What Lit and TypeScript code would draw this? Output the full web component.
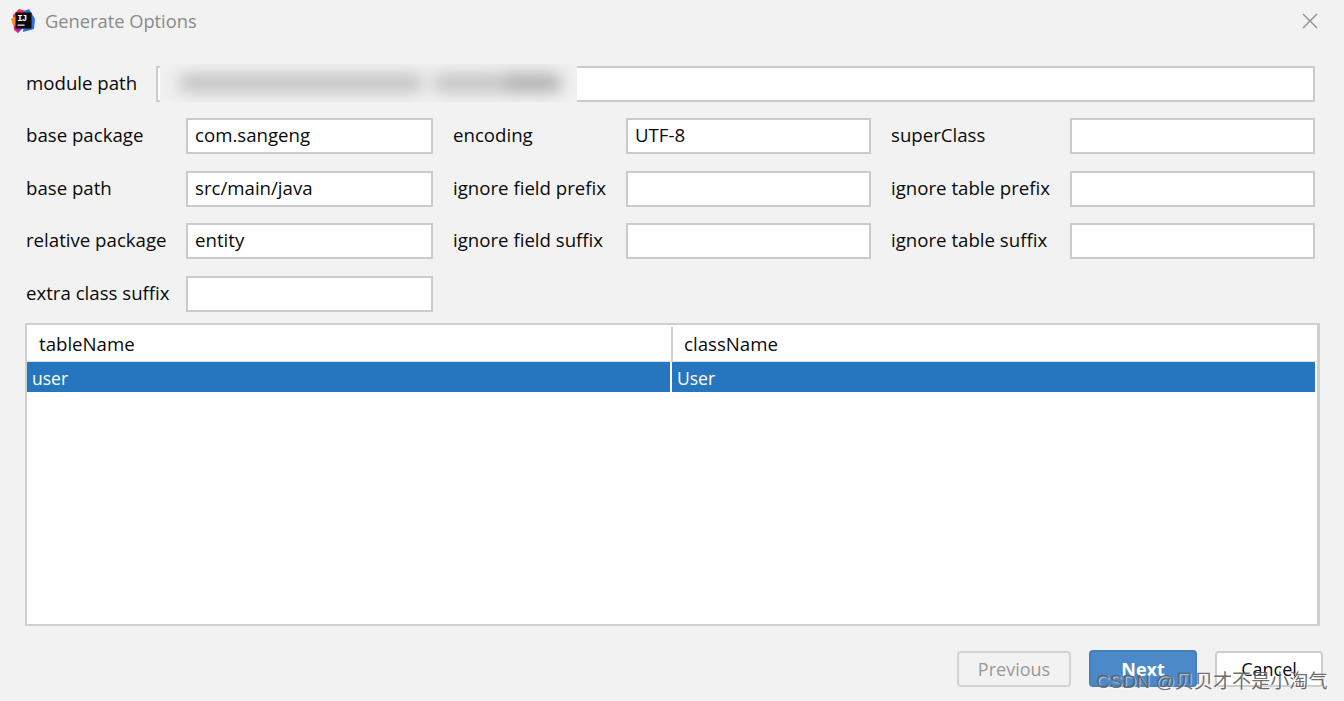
import { LitElement, html, css } from "lit";
import { customElement } from "lit/decorators.js";

const rows: [string, string, string, string, string, string][] = [
  ["base package", "com.sangeng", "encoding", "UTF-8", "superClass", ""],
  ["base path", "src/main/java", "ignore field prefix", "", "ignore table prefix", ""],
  ["relative package", "entity", "ignore field suffix", "", "ignore table suffix", ""],
];

@customElement("app-root")
export class AppRoot extends LitElement {
  static styles = css`
    :host {
      display: block;
      width: 1344px;
      height: 701px;
      background: #f2f2f2;
      font-family: "Open Sans", "Noto Sans", sans-serif;
      font-size: 18.65px;
      color: #0a0a0a;
      position: relative;
      overflow: hidden;
    }
    .title {
      height: 44px;
      display: flex;
      align-items: center;
      padding: 0 25px 2px 11px;
      gap: 10px;
      box-sizing: border-box;
      font-size: 18.3px;
    }
    .title .t { color: #8a8a8a; flex: 1; padding-bottom: 2px; }
    .logo { width: 24px; height: 24px; display: block; }
    .close { width: 18px; height: 18px; display: block; }
    .form {
      padding: 22px 29px 0 26px;
      display: flex;
      flex-direction: column;
      gap: 16px;
    }
    label { padding-bottom: 3px; }
    .mod {
      display: flex;
      align-items: center;
      position: relative;
    }
    .mod label { width: 130px; padding-bottom: 4px; }
    .grid {
      display: grid;
      grid-template-columns: 160px 247px 193px 245px 199px 245px;
      row-gap: 16.5px;
      align-items: center;
    }
    .grid .gap { padding-left: 20px; }
    input {
      box-sizing: border-box;
      height: 36px;
      width: 100%;
      border: 2px solid #cbcbcb;
      background: #fff;
      padding: 0 7px 3px;
      font: inherit;
      color: inherit;
      outline: none;
      margin: 0;
      display: block;
    }
    .mod input { flex: 1; width: auto; }
    .mask {
      position: absolute;
      left: 134px;
      top: -2px;
      width: 417px;
      height: 38px;
      background: #f1f1f1;
      overflow: hidden;
    }
    .smear {
      position: absolute;
      top: 10px;
      height: 18px;
      background: #c2c2c2;
      filter: blur(8px);
      border-radius: 9px;
    }
    .smear.dark { background: #adadad; }
    .table {
      box-sizing: border-box;
      margin: 11.5px 0 0 25px;
      width: 1295px;
      height: 303px;
      border: 2px solid #d0d0d0;
      border-right-width: 3px;
      background: #fff;
    }
    .thead {
      display: grid;
      grid-template-columns: 644px 1fr;
      height: 37px;
      border-bottom: 1px solid #dcdcdc;
      box-sizing: border-box;
    }
    .thead div { padding: 0 0 2px 12px; display: flex; align-items: center; height: 34px; margin-top: 2px; box-sizing: border-box; }
    .thead div + div { border-left: 2px solid #d0d0d0; padding-left: 11px; }
    .row {
      display: grid;
      grid-template-columns: 643px 1fr;
      column-gap: 2px;
      height: 30px;
      margin-right: 2px;
      color: #fff;
      font-size: 17.5px;
    }
    .row div { padding-left: 5px; display: flex; align-items: center; background: #2675bf; padding-top: 1px; box-sizing: border-box; }
    .foot {
      position: absolute;
      right: 21px;
      top: 650px;
      display: flex;
      gap: 18px;
      align-items: center;
      font-size: 18px;
    }
    button {
      box-sizing: border-box;
      font: inherit;
      height: 36px;
      width: 108px;
      border-radius: 4px;
      border: 2px solid #cdcdcd;
      background: #fff;
      color: #0a0a0a;
      padding: 0;
    }
    button.prev {
      width: 114px;
      background: #f2f2f2;
      color: #999;
      border-color: #d3d3d3;
    }
    button.next {
      height: 37px;
      background: #4c89c8;
      border-color: #4580bd;
      color: #fff;
      font-weight: 700;
    }
    .mark {
      position: absolute;
      left: 1096px;
      top: 668px;
      font-family: "Liberation Sans", "Noto Sans CJK SC", sans-serif;
      font-size: 19.1px;
      line-height: 27px;
      color: rgba(92, 92, 92, 0.9);
      text-shadow: 1px 1px 1px rgba(255, 255, 255, 0.6);
      white-space: nowrap;
    }
  `;

  render() {
    return html`
      <div class="title">
        <svg class="logo" viewBox="0 0 24 24">
          <path d="M2 6 L8 0 L15 2 L14 12 L7 24 L3 21 Z" fill="#ee2f62" />
          <path d="M0 10 L5 7 L6 17 L2 16 Z" fill="#fb8a25" />
          <path d="M13 2 L18 0 L24 10 L23 20 L12 23 Z" fill="#2f6fe4" />
          <path d="M3 17 L12 19 L7 24 Z" fill="#a527b0" />
          <rect x="4.5" y="3.5" width="16" height="16" fill="#0a0a0a" />
          <text x="6.2" y="11.8" font-size="9" font-family="Liberation Mono" font-weight="700" textLength="10" fill="#fff">IJ</text>
          <rect x="6.5" y="15.5" width="7" height="1.3" fill="#e8e8e8" />
        </svg>
        <span class="t">Generate Options</span>
        <svg class="close" viewBox="0 0 18 18">
          <path d="M2 2 L16 16 M16 2 L2 16" stroke="#8f8f8f" stroke-width="1.4" fill="none" />
        </svg>
      </div>
      <div class="form">
        <div class="mod">
          <label>module path</label>
          <input />
          <div class="mask">
            <div class="smear" style="left:18px;width:246px"></div>
            <div class="smear" style="left:272px;width:70px"></div>
            <div class="smear dark" style="left:338px;width:64px"></div>
          </div>
        </div>
        <div class="grid">
          ${rows.map(
            (r) => html`
              <label>${r[0]}</label><input .value=${r[1]} />
              <label class="gap">${r[2]}</label><input .value=${r[3]} />
              <label class="gap">${r[4]}</label><input .value=${r[5]} />
            `
          )}
          <label>extra class suffix</label><input />
        </div>
      </div>
      <div class="table">
        <div class="thead"><div>tableName</div><div>className</div></div>
        <div class="row"><div>user</div><div>User</div></div>
      </div>
      <div class="foot">
        <button class="prev">Previous</button>
        <button class="next">Next</button>
        <button>Cancel</button>
      </div>
      <div class="mark">CSDN @贝贝才不是小淘气</div>
    `;
  }
}
